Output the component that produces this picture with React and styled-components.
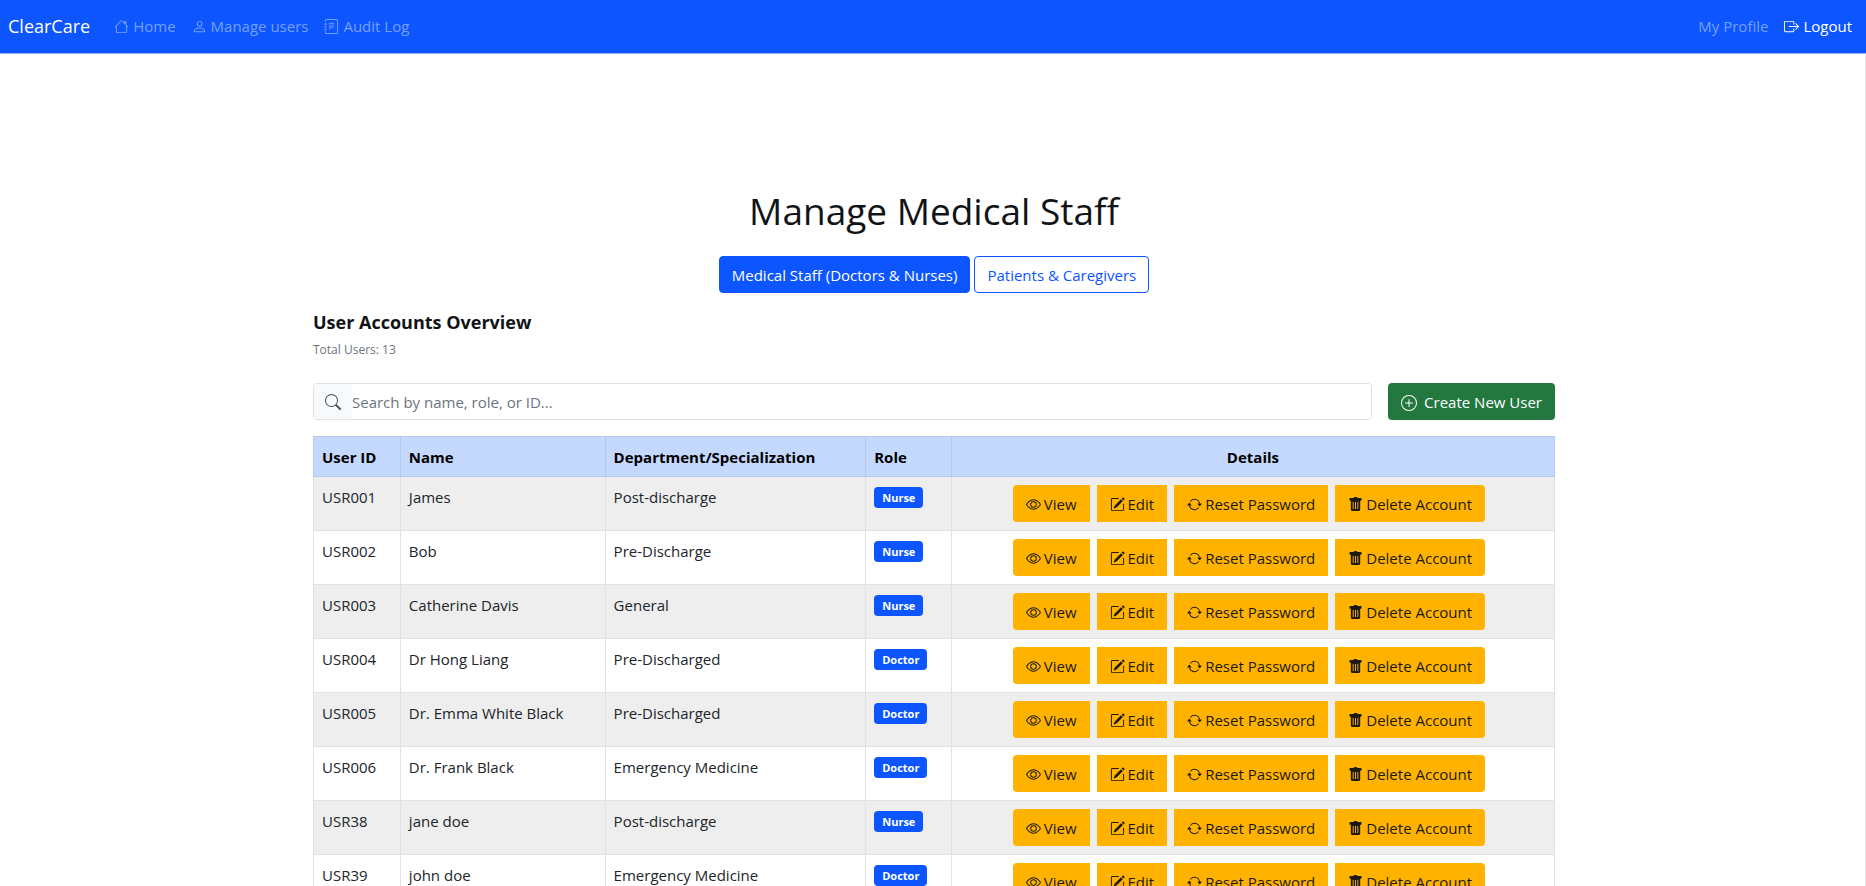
import React from "react";
import styled, { createGlobalStyle, css } from "styled-components";
import {
  BsHouse, BsPerson, BsJournalText, BsBoxArrowRight, BsSearch, BsPlusCircle,
  BsEye, BsPencilSquare, BsArrowRepeat, BsTrashFill,
} from "react-icons/bs";

const GlobalStyle = createGlobalStyle`
  *, *::before, *::after { box-sizing: border-box; }
  body {
    margin: 0;
    box-shadow: inset -1px 0 #e1e3e6;
    background: #fff;
    color: #212529;
    font-family: "Open Sans", "Noto Sans", sans-serif;
    font-size: 15px;
    line-height: 23px;
  }
  button, input { font: inherit; }
`;

const Navbar = styled.nav`
  display: flex;
  align-items: center;
  justify-content: space-between;
  height: 54px;
  padding: 0 14px 0 8px;
  background: #0d55ff;
  border-bottom: 1px solid #8fb0ff;
`;

const Brand = styled.a`
  margin-right: 8px;
  color: #fff;
  font-size: 18px;
  text-decoration: none;
`;

const NavGroup = styled.div`
  display: flex;
  align-items: center;
  gap: 16px;
`;

const NavLink = styled.a`
  display: flex;
  align-items: center;
  gap: 4px;
  color: ${(p) => (p.$bright ? "#fff" : "#75a0ff")};
  text-decoration: none;
  svg { width: 15px; height: 15px; }
`;

const Container = styled.main`
  width: 67%;
  max-width: 1244px;
  min-width: 1100px;
  margin: 0 auto;
  padding: 134px 0 0 2px;
`;

const Title = styled.h1`
  margin: 0 0 22px;
  font-size: 37px;
  line-height: 46px;
  font-weight: 400;
  color: #111417;
  text-align: center;
`;

const Tabs = styled.div`
  display: flex;
  justify-content: center;
  gap: 4px;
  margin-bottom: 15px;
`;

const controlBox = css`
  height: 37px;
  padding: 2px 12px 0;
  border: 1px solid transparent;
  border-radius: 4px;
  white-space: nowrap;
`;

const Tab = styled.button`
  ${controlBox}
  color: ${(p) => (p.$active ? "#fff" : "#0d55ff")};
  background: ${(p) => (p.$active ? "#0d55ff" : "#fff")};
  border-color: #0d55ff;
`;

const Heading = styled.h2`
  margin: 0;
  color: #111417;
  font-size: 18px;
  line-height: 28px;
  font-weight: 700;
`;

const Total = styled.p`
  margin: 2px 0 22px;
  color: #6c757d;
  font-size: 12px;
`;

const Toolbar = styled.div`
  display: flex;
  gap: 16px;
  margin-bottom: 16px;
`;

const SearchBox = styled.label`
  display: flex;
  flex: 1;
  height: 37px;
  overflow: hidden;
  border: 1px solid #dee2e6;
  border-radius: 4px;
  color: #495057;
`;

const SearchIcon = styled.span`
  display: flex;
  align-items: center;
  justify-content: center;
  width: 38px;
  background: #f8f9fa;
  svg { width: 16px; height: 16px; }
`;

const SearchInput = styled.input`
  flex: 1;
  padding: 2px 0 0;
  border: 0;
  outline: 0;
  color: #212529;
  &::placeholder { color: #6c757d; opacity: 1; }
`;

const CreateButton = styled.button`
  ${controlBox}
  display: flex;
  align-items: center;
  gap: 7px;
  color: #fff;
  background: #22783f;
  svg { width: 16px; height: 16px; }
`;

const Table = styled.table`
  width: 100%;
  border-collapse: collapse;
  table-layout: fixed;
`;

const Col = styled.col`
  width: ${(p) => p.$width};
`;

const HeadCell = styled.th`
  height: 40px;
  padding: 2px 8px 0;
  background: #c5d9ff;
  border: 1px solid #b4c8ec;
  color: #000;
  font-weight: 700;
  text-align: ${(p) => (p.$center ? "center" : "left")};
`;

const Row = styled.tr`
  background: #fff;
  &:nth-child(odd) { background: #eee; }
`;

const Cell = styled.td`
  height: 54px;
  padding: 8px;
  border: 1px solid #dee2e6;
  line-height: 25px;
  vertical-align: top;
`;

const Badge = styled.span`
  display: block;
  width: fit-content;
  margin-top: 2px;
  padding: 0 8px;
  border-radius: 4px;
  background: #0d55ff;
  color: #fff;
  font-size: 11px;
  line-height: 21px;
  font-weight: 700;
`;

const Actions = styled.div`
  display: flex;
  justify-content: center;
  gap: 7px;
  padding-right: 8px;
`;

const ActionButton = styled.button`
  ${controlBox}
  display: flex;
  align-items: center;
  gap: 3px;
  border-radius: 0;
  background: #ffb300;
  color: #1c1a10;
  svg { width: 15px; height: 15px; }
  &:first-child { border-radius: 4px 0 0 4px; }
  &:last-child { border-radius: 0 4px 4px 0; }
`;

const users = [
  ["USR001", "James", "Post-discharge", "Nurse"],
  ["USR002", "Bob", "Pre-Discharge", "Nurse"],
  ["USR003", "Catherine Davis", "General", "Nurse"],
  ["USR004", "Dr Hong Liang", "Pre-Discharged", "Doctor"],
  ["USR005", "Dr. Emma White Black", "Pre-Discharged", "Doctor"],
  ["USR006", "Dr. Frank Black", "Emergency Medicine", "Doctor"],
  ["USR38", "jane doe", "Post-discharge", "Nurse"],
  ["USR39", "john doe", "Emergency Medicine", "Doctor"],
];

export default function App() {
  return (
    <>
      <GlobalStyle />
      <Navbar>
        <NavGroup>
          <Brand href="#">ClearCare</Brand>
          <NavLink href="#"><BsHouse />Home</NavLink>
          <NavLink href="#"><BsPerson />Manage users</NavLink>
          <NavLink href="#"><BsJournalText />Audit Log</NavLink>
        </NavGroup>
        <NavGroup>
          <NavLink href="#">My Profile</NavLink>
          <NavLink href="#" $bright><BsBoxArrowRight />Logout</NavLink>
        </NavGroup>
      </Navbar>
      <Container>
        <Title>Manage Medical Staff</Title>
        <Tabs>
          <Tab type="button" $active>Medical Staff (Doctors &amp; Nurses)</Tab>
          <Tab type="button">Patients &amp; Caregivers</Tab>
        </Tabs>
        <Heading>User Accounts Overview</Heading>
        <Total>Total Users: 13</Total>
        <Toolbar>
          <SearchBox>
            <SearchIcon><BsSearch /></SearchIcon>
            <SearchInput type="text" aria-label="Search users" placeholder="Search by name, role, or ID..." />
          </SearchBox>
          <CreateButton type="button"><BsPlusCircle />Create New User</CreateButton>
        </Toolbar>
        <Table>
          <colgroup>
            <Col $width="7%" />
            <Col $width="16.5%" />
            <Col $width="21%" />
            <Col $width="6.9%" />
            <Col />
          </colgroup>
          <thead>
            <tr>
              <HeadCell>User ID</HeadCell>
              <HeadCell>Name</HeadCell>
              <HeadCell>Department/Specialization</HeadCell>
              <HeadCell>Role</HeadCell>
              <HeadCell $center>Details</HeadCell>
            </tr>
          </thead>
          <tbody>
            {users.map(([id, name, department, role]) => (
              <Row key={id}>
                <Cell>{id}</Cell>
                <Cell>{name}</Cell>
                <Cell>{department}</Cell>
                <Cell><Badge>{role}</Badge></Cell>
                <Cell>
                  <Actions>
                    <ActionButton type="button"><BsEye />View</ActionButton>
                    <ActionButton type="button"><BsPencilSquare />Edit</ActionButton>
                    <ActionButton type="button"><BsArrowRepeat />Reset Password</ActionButton>
                    <ActionButton type="button"><BsTrashFill />Delete Account</ActionButton>
                  </Actions>
                </Cell>
              </Row>
            ))}
          </tbody>
        </Table>
      </Container>
    </>
  );
}
